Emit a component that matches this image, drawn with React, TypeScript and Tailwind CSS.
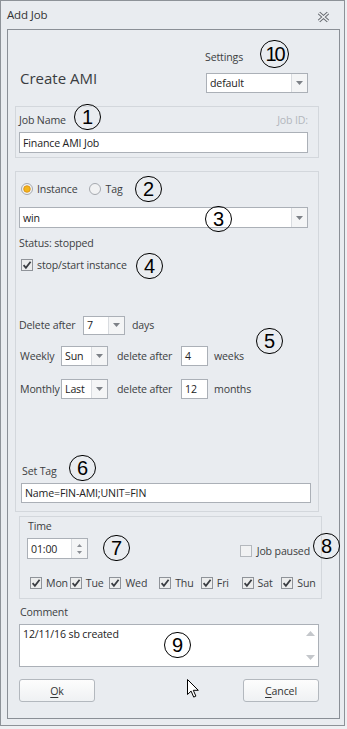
import React from "react";
import clsx from "clsx";

const Arrow = () => (
  <svg width="7" height="4" viewBox="0 0 7 4">
    <path d="M0 0h7L3.5 4z" fill="#7d8187" />
  </svg>
);

const Combo = ({ className, text }: { className: string; text: string }) => (
  <div className={clsx("flex bg-white border border-[#abb0b7]", className)}>
    <div className="flex-1 flex items-center pl-[3px] text-[#222]">{text}</div>
    <div className="w-[16px] flex items-center justify-center border-l border-[#d9dce0] bg-[#f4f5f6]">
      <Arrow />
    </div>
  </div>
);

const Field = ({ className, text }: { className: string; text: string }) => (
  <div className={clsx("flex items-center bg-white border border-[#abb0b7] pl-[3px] text-[#222]", className)}>
    {text}
  </div>
);

const Check = ({ on = true }: { on?: boolean }) => (
  <svg width="12" height="12" viewBox="0 0 12 12" className="shrink-0">
    <rect x="0.5" y="0.5" width="11" height="11" fill={on ? "#eceded" : "#f1f2f3"} stroke={on ? "#8f9399" : "#b4b8bd"} />
    {on && <path d="M2.6 6.2l2.3 2.6L9.6 2.8" fill="none" stroke="#3a3d42" strokeWidth="1.8" />}
  </svg>
);

const Radio = ({ on }: { on: boolean }) => (
  <svg width="12" height="12" viewBox="0 0 12 12" className="shrink-0">
    <circle cx="6" cy="6" r="5.5" fill="#f1f2f3" stroke="#a4a8ae" />
    {on && <circle cx="6" cy="6" r="3.3" fill="#f3b51c" stroke="#d88c10" strokeWidth="0.8" />}
  </svg>
);

const Num = ({ className, n }: { className: string; n: string }) => (
  <div
    className={clsx(
      "absolute flex items-center justify-center rounded-full border-[1.3px] border-black text-black text-[20px] leading-none font-['Liberation_Sans',Arial,sans-serif]",
      className
    )}
  >
    {n}
  </div>
);

const Day = ({ className, label }: { className: string; label: string }) => (
  <div className={clsx("flex items-center gap-[4px]", className)}>
    <Check />
    <span>{label}</span>
  </div>
);

export default function App() {
  return (
    <div className="relative w-[347px] h-[729px] bg-[#eef0f3] font-['Open_Sans',sans-serif] text-[10.6px] leading-[14px] tracking-[-0.15px] text-[#3c3e42]">
      <div className="w-[345px] h-[726px] border border-[#8d9298] bg-[#e9ecf0] flex flex-col">
        {/* title bar */}
        <div className="h-[28px] flex items-center pl-[6px] pr-[14px]">
          <span className="text-[11.5px] text-[#333]">Add Job</span>
          <svg width="13" height="12" viewBox="0 0 13 12" className="ml-auto mt-[4px]">
            <path d="M2 2l9 8M11 2l-9 8" stroke="#686c72" strokeWidth="3.4" />
            <path d="M2 2l9 8M11 2l-9 8" stroke="#eef0f3" strokeWidth="1.5" />
          </svg>
        </div>

        {/* main panel */}
        <div className="ml-[6px] w-[333px] h-[690px] border border-[#8a8f96] flex flex-col">
          <div className="h-[76px] flex">
            <div className="pl-[12px] pt-[38px] text-[15px] leading-[20px] tracking-normal text-[#3a3c40]">Create AMI</div>
            <div className="ml-auto mr-[31px] w-[102px] flex flex-col pt-[20px]">
              <span className="-ml-[1px]">Settings</span>
              <Combo className="mt-[9px] h-[20px]" text="default" />
            </div>
          </div>

          {/* job name */}
          <div className="ml-[7px] w-[304px] h-[52px] border border-[#d3d7dc] flex flex-col pt-[6px]">
            <div className="flex pl-[3px] pr-[10px]">
              <span>Job Name</span>
              <span className="ml-auto text-[#b3b7bd]">Job ID:</span>
            </div>
            <Field className="mt-[5px] ml-[3px] w-[289px] h-[21px]" text="Finance AMI Job" />
          </div>

          {/* source group */}
          <div className="mt-[13px] ml-[7px] w-[304px] h-[341px] border border-[#d3d7dc] flex flex-col pt-[10px]">
            <div className="flex items-center pl-[5px]">
              <Radio on />
              <span className="ml-[4px]">Instance</span>
              <span className="ml-[11px]"><Radio on={false} /></span>
              <span className="ml-[5px]">Tag</span>
            </div>
            <Combo className="mt-[11px] ml-[3px] w-[289px] h-[21px]" text="win" />
            <div className="mt-[8px] pl-[3px]">Status: stopped</div>
            <div className="mt-[8px] pl-[5px] flex items-center gap-[4px]">
              <Check />
              <span>stop/start instance</span>
            </div>

            <div className="mt-[43px] pl-[3px] h-[20px] flex items-center">
              <span className="w-[64px]">Delete after</span>
              <Combo className="w-[42px] h-[19px]" text="7" />
              <span className="ml-[7px]">days</span>
            </div>
            <div className="mt-[11px] pl-[4px] h-[20px] flex items-center">
              <span className="w-[41px]">Weekly</span>
              <Combo className="w-[47px] h-[20px]" text="Sun" />
              <span className="ml-[9px] w-[64px]">delete after</span>
              <Field className="w-[27px] h-[20px]" text="4" />
              <span className="ml-[6px]">weeks</span>
            </div>
            <div className="mt-[13px] pl-[4px] h-[20px] flex items-center">
              <span className="w-[41px]">Monthly</span>
              <Combo className="w-[47px] h-[20px]" text="Last" />
              <span className="ml-[9px] w-[64px]">delete after</span>
              <Field className="w-[27px] h-[20px]" text="12" />
              <span className="ml-[6px]">months</span>
            </div>

            <div className="mt-[65px] pl-[6px]">Set Tag</div>
            <Field className="mt-[5px] ml-[5px] w-[290px] h-[20px]" text="Name=FIN-AMI;UNIT=FIN" />
          </div>

          {/* schedule group */}
          <div className="mt-[4px] ml-[11px] w-[303px] h-[83px] border border-[#d3d7dc] flex flex-col pt-[2px]">
            <div className="pl-[8px]">Time</div>
            <div className="mt-[5px] pl-[7px] pr-[11px] flex items-center">
              <div className="w-[61px] h-[21px] flex bg-white border border-[#abb0b7]">
                <div className="flex-1 flex items-center pl-[3px] text-[#222]">01:00</div>
                <div className="w-[16px] flex flex-col items-center justify-center gap-[4px] border-l border-[#d9dce0] bg-[#f4f5f6]">
                  <svg width="5" height="3" viewBox="0 0 5 3"><path d="M0 3h5L2.5 0z" fill="#8a8e94" /></svg>
                  <svg width="5" height="3" viewBox="0 0 5 3"><path d="M0 0h5L2.5 3z" fill="#8a8e94" /></svg>
                </div>
              </div>
              <div className="ml-auto mt-[4px] flex items-center gap-[5px]">
                <Check on={false} />
                <span>Job paused</span>
              </div>
            </div>
            <div className="mt-[17px] pl-[10px] flex items-center">
              <Day className="w-[40px]" label="Mon" />
              <Day className="w-[40px]" label="Tue" />
              <Day className="w-[50px]" label="Wed" />
              <Day className="w-[42px]" label="Thu" />
              <Day className="w-[41px]" label="Fri" />
              <Day className="w-[40px]" label="Sat" />
              <Day className="w-[40px]" label="Sun" />
            </div>
          </div>

          {/* comment */}
          <div className="mt-[6px] pl-[12px]">Comment</div>
          <div className="mt-[5px] ml-[11px] w-[300px] h-[43px] flex bg-white border border-[#abb0b7]">
            <div className="flex-1 pl-[3px] pt-[2px] text-[#222]">12/11/16 sb created</div>
            <div className="w-[16px] flex flex-col items-center justify-between py-[6px]">
              <svg width="9" height="5" viewBox="0 0 9 5"><path d="M0 5h9L4.5 0z" fill="#c4c7cb" /></svg>
              <svg width="9" height="5" viewBox="0 0 9 5"><path d="M0 0h9L4.5 5z" fill="#c4c7cb" /></svg>
            </div>
          </div>

          {/* buttons */}
          <div className="mt-[12px] ml-[11px] w-[300px] flex justify-between">
            <button className="w-[76px] h-[23px] rounded-[3px] border border-[#b3b8be] bg-gradient-to-b from-[#fdfdfd] to-[#eff1f3] text-[#333]">
              <span className="underline underline-offset-2">O</span>k
            </button>
            <button className="w-[76px] h-[23px] rounded-[3px] border border-[#b3b8be] bg-gradient-to-b from-[#fdfdfd] to-[#eff1f3] text-[#333]">
              <span className="underline underline-offset-2">C</span>ancel
            </button>
          </div>
        </div>
      </div>

      {/* mouse cursor */}
      <svg width="13" height="19" viewBox="0 0 13 19" className="absolute left-[187px] top-[679px]">
        <path d="M0.5 0.5v15l3.6-3.4 2.6 6 2.2-1-2.6-5.8h5z" fill="#fff" stroke="#000" strokeWidth="1" strokeLinejoin="miter" />
      </svg>

      {/* annotations */}
      <Num className="left-[260px] top-[40px] w-[29px] h-[28px] tracking-[-2px]" n="10" />
      <Num className="left-[74px] top-[104px] w-[27px] h-[26px] tracking-normal" n="1" />
      <Num className="left-[135px] top-[176px] w-[27px] h-[26px] tracking-normal" n="2" />
      <Num className="left-[205px] top-[206px] w-[27px] h-[26px] tracking-normal" n="3" />
      <Num className="left-[136px] top-[253px] w-[27px] h-[26px] tracking-normal" n="4" />
      <Num className="left-[256px] top-[328px] w-[27px] h-[26px] tracking-normal" n="5" />
      <Num className="left-[69px] top-[455px] w-[27px] h-[26px] tracking-normal" n="6" />
      <Num className="left-[103px] top-[535px] w-[27px] h-[26px] tracking-normal" n="7" />
      <Num className="left-[313px] top-[533px] w-[27px] h-[26px] tracking-normal" n="8" />
      <Num className="left-[164px] top-[632px] w-[27px] h-[26px] tracking-normal" n="9" />
    </div>
  );
}
